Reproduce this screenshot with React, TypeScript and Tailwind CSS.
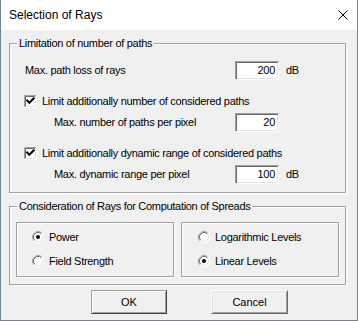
import React from "react";

const font = { fontFamily: '"Liberation Sans", Arial, sans-serif' };

function Check({ checked }: { checked: boolean }) {
  return (
    <svg width="13" height="13" viewBox="0 0 13 13" className="shrink-0">
      <rect x="0" y="0" width="13" height="13" fill="#ffffff" />
      <path d="M0.5 12.5 V0.5 H12.5" stroke="#a0a0a0" fill="none" />
      <path d="M1.5 11.5 V1.5 H11.5" stroke="#696969" fill="none" />
      <path d="M12.5 0 V12.5 H0" stroke="#ffffff" fill="none" />
      <path d="M11.5 1 V11.5 H1" stroke="#e3e3e3" fill="none" />
      {checked && (
        <path d="M3.3 5.6 L5.3 7.7 L9.6 3.4" stroke="#000" strokeWidth="2.1" fill="none" strokeLinecap="square" />
      )}
    </svg>
  );
}

function Radio({ checked }: { checked: boolean }) {
  return (
    <svg width="12" height="12" viewBox="0 0 12 12" className="shrink-0">
      <circle cx="6" cy="6" r="5.5" fill="#ffffff" />
      <path d="M2.11 9.89 A5.5 5.5 0 0 1 9.89 2.11" stroke="#a0a0a0" fill="none" />
      <path d="M9.89 2.11 A5.5 5.5 0 0 1 2.11 9.89" stroke="#ffffff" fill="none" />
      <path d="M2.82 9.18 A4.5 4.5 0 0 1 9.18 2.82" stroke="#696969" fill="none" />
      <path d="M9.18 2.82 A4.5 4.5 0 0 1 2.82 9.18" stroke="#e3e3e3" fill="none" />
      {checked && <circle cx="6" cy="6" r="2" fill="#000" />}
    </svg>
  );
}

function Field({ value }: { value: string }) {
  return (
    <div className="w-[44px] h-[19px] shrink-0 bg-white border border-t-[#a0a0a0] border-l-[#a0a0a0] border-r-white border-b-white shadow-[inset_1px_1px_0_#696969,inset_-1px_-1px_0_#e3e3e3] flex items-center justify-end pr-[3px] text-[11px] leading-[13px]">
      {value}
    </div>
  );
}

function Legend({ children }: { children: React.ReactNode }) {
  return (
    <span className="-mt-[7px] ml-[7px] px-[2px] bg-[#f0f0f0] w-fit h-[13px] leading-[13px] text-[11px] tracking-[-0.3px] whitespace-nowrap">
      {children}
    </span>
  );
}

const etched = "border border-[#a0a0a0] shadow-[inset_1px_1px_0_#fff,1px_1px_0_#fff]";

export default function App() {
  return (
    <div
      className="w-[358px] h-[321px] bg-[#f0f0f0] border-l border-r border-b border-[#6f84a0] flex flex-col text-black overflow-hidden"
      style={font}
    >
      {/* title bar */}
      <div className="h-[30px] shrink-0 bg-white flex items-center pl-[8px] pr-[9px]">
        <span className="text-[12px] leading-[14px] flex-1">Selection of Rays</span>
        <svg width="10" height="10" viewBox="0 0 10 10">
          <path d="M0.5 0.5 L9.5 9.5 M9.5 0.5 L0.5 9.5" stroke="#000" strokeWidth="1" />
        </svg>
      </div>

      {/* group 1 */}
      <div className={`mt-[13px] ml-[8px] w-[337px] flex flex-col ${etched} text-[11px] tracking-[-0.3px]`}>
        <Legend>Limitation of number of paths</Legend>
        <div className="mt-[11px] flex items-center pl-[15px] h-[19px]">
          <span className="w-[210px] leading-[13px]">Max. path loss of rays</span>
          <Field value="200" />
          <span className="ml-[7px] leading-[13px]">dB</span>
        </div>
        <div className="mt-[15px] flex items-center pl-[14px] h-[13px] gap-[5px]">
          <Check checked />
          <span className="leading-[13px] whitespace-nowrap">Limit additionally number of considered paths</span>
        </div>
        <div className="mt-[5px] flex items-center pl-[44px] h-[19px]">
          <span className="w-[181px] leading-[13px]">Max. number of paths per pixel</span>
          <Field value="20" />
        </div>
        <div className="mt-[15px] flex items-center pl-[14px] h-[13px] gap-[5px]">
          <Check checked />
          <span className="leading-[13px] whitespace-nowrap">Limit additionally dynamic range of considered paths</span>
        </div>
        <div className="mt-[5px] mb-[8px] flex items-center pl-[44px] h-[19px]">
          <span className="w-[181px] leading-[13px]">Max. dynamic range per pixel</span>
          <Field value="100" />
          <span className="ml-[7px] leading-[13px]">dB</span>
        </div>
      </div>

      {/* group 2 */}
      <div className={`mt-[13px] ml-[8px] w-[337px] flex flex-col ${etched} text-[11px] tracking-[-0.3px]`}>
        <Legend>Consideration of Rays for Computation of Spreads</Legend>
        <div className="mt-[9px] mb-[7px] px-[6px] flex gap-[7px]">
          <div className={`w-[158px] h-[55px] ${etched} flex flex-col pt-[8px] pl-[15px] gap-[12px]`}>
            <div className="flex items-center h-[12px] gap-[5px]">
              <Radio checked />
              <span className="leading-[13px]">Power</span>
            </div>
            <div className="flex items-center h-[12px] gap-[5px]">
              <Radio checked={false} />
              <span className="leading-[13px]">Field Strength</span>
            </div>
          </div>
          <div className={`w-[158px] h-[55px] ${etched} flex flex-col pt-[8px] pl-[16px] gap-[12px]`}>
            <div className="flex items-center h-[12px] gap-[5px]">
              <Radio checked={false} />
              <span className="leading-[13px]">Logarithmic Levels</span>
            </div>
            <div className="flex items-center h-[12px] gap-[5px]">
              <Radio checked />
              <span className="leading-[13px]">Linear Levels</span>
            </div>
          </div>
        </div>
      </div>

      {/* buttons */}
      <div className="mt-[5px] ml-[90px] flex gap-[44px] text-[11px]">
        <button className="w-[76px] h-[24px] bg-[#f0f0f0] border border-t-[#a0a0a0] border-l-[#a0a0a0] border-r-[#404040] border-b-[#404040] shadow-[inset_1px_1px_0_#fff,inset_-1px_-1px_0_#a0a0a0] flex items-center justify-center leading-[13px]">
          OK
        </button>
        <button className="w-[77px] h-[24px] bg-[#f0f0f0] border border-t-white border-l-white border-r-[#696969] border-b-[#696969] shadow-[inset_1px_1px_0_#e3e3e3,inset_-1px_-1px_0_#a0a0a0] flex items-center justify-center leading-[13px]">
          Cancel
        </button>
      </div>
    </div>
  );
}
